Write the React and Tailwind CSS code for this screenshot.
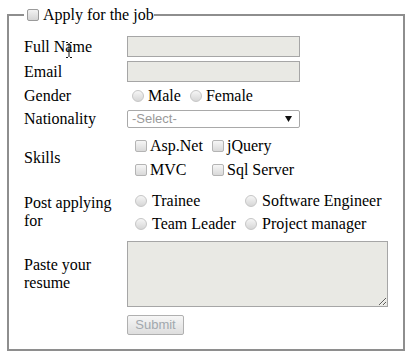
import React from 'react';

function Check() {
  return <span className="inline-block h-[12px] w-[12px] shrink-0 rounded-[2px] border border-[#b4b4b4] bg-linear-to-b from-[#f6f6f6] to-[#d9d9d9]" />;
}

function Radio() {
  return <span className="inline-block h-[12px] w-[12px] shrink-0 rounded-full border border-[#c6c6c6] bg-linear-to-b from-[#f6f6f6] to-[#d6d6d6]" />;
}

function Row({ label, className = '', children, labelExtra }) {
  return (
    <div className={`flex items-center ${className}`}>
      <div className="relative w-[103px] shrink-0 pr-[4px]">
        {label}
        {labelExtra}
      </div>
      <div className="flex-1">{children}</div>
    </div>
  );
}

function IBeam() {
  return (
    <svg className="pointer-events-none absolute left-[41px] top-[4px]" width="8" height="16" viewBox="0 0 8 16">
      <path d="M1 0.5h2M5 0.5h2M4 1v14M1 15.5h2M5 15.5h2M2.5 8h3" stroke="#111" strokeWidth="1" fill="none" />
    </svg>
  );
}

export default function App() {
  return (
    <div className="min-h-[356px] bg-white px-[7px] pt-[6px] pb-[5px] font-['Liberation_Serif',serif] text-[16px] leading-[18px] text-black">
      <fieldset className="border-2 border-[#8e8e8e] pl-[15px] pr-[10px] pb-[14px]">
        <legend>
          <span className="flex h-[18px] items-center">
            <span className="ml-[3px] mr-[4px] inline-block h-[12px] w-[12px] rounded-[2px] border border-[#9a9a9a] bg-linear-to-b from-[#f2f2f2] to-[#d4d4d4]" />
            Apply for the job
          </span>
        </legend>

        <Row label="Full Name" className="mt-[12px] h-[21px]" labelExtra={<IBeam />}>
          <input readOnly className="block h-[21px] w-[173px] border border-[#a6a6a6] bg-[#e9e9e4] outline-none" />
        </Row>

        <Row label="Email" className="mt-[4px] h-[21px]">
          <input readOnly className="block h-[21px] w-[173px] border border-[#a6a6a6] bg-[#e9e9e4] outline-none" />
        </Row>

        <Row label="Gender" className="mt-[2px] h-[24px]">
          <div className="flex items-center">
            <span className="ml-[5px] mr-[4px] flex"><Radio /></span>
            <span>Male</span>
            <span className="ml-[9px] mr-[4px] flex"><Radio /></span>
            <span>Female</span>
          </div>
        </Row>

        <Row label="Nationality" className="mt-[2px] h-[18px]">
          <div className="flex h-[18px] w-[173px] items-center justify-between rounded-[2px] border border-[#a9a9a9] bg-white pl-[4px] pr-[7px] font-['Liberation_Sans',Arial,sans-serif] text-[13px] text-[#9a9a9a]">
            <span>-Select-</span>
            <svg width="7" height="6" viewBox="0 0 7 6">
              <path d="M0 0h7L3.5 6z" fill="#111" />
            </svg>
          </div>
        </Row>

        <Row label="Skills" className="mt-[6px] h-[48px]">
          <div className="grid grid-cols-[77px_auto] grid-rows-[24px_24px]">
            <div className="flex items-center"><span className="ml-[8px] mr-[3px] flex"><Check /></span>Asp.Net</div>
            <div className="flex items-center"><span className="ml-[8px] mr-[3px] flex"><Check /></span>jQuery</div>
            <div className="flex items-center"><span className="ml-[8px] mr-[3px] flex"><Check /></span>MVC</div>
            <div className="flex items-center"><span className="ml-[8px] mr-[3px] flex"><Check /></span>Sql Server</div>
          </div>
        </Row>

        <Row label="Post applying for" className="mt-[7px] h-[46px]">
          <div className="grid grid-cols-[110px_auto] grid-rows-[23px_23px]">
            <div className="flex items-center"><span className="ml-[8px] mr-[5px] flex"><Radio /></span>Trainee</div>
            <div className="flex items-center"><span className="ml-[8px] mr-[5px] flex"><Radio /></span>Software Engineer</div>
            <div className="flex items-center"><span className="ml-[8px] mr-[5px] flex"><Radio /></span>Team Leader</div>
            <div className="flex items-center"><span className="ml-[8px] mr-[5px] flex"><Radio /></span>Project manager</div>
          </div>
        </Row>

        <Row label="Paste your resume" className="mt-[6px] h-[66px]">
          <textarea readOnly className="block h-[66px] w-[261px] resize border border-[#a6a6a6] bg-[#e9e9e4] outline-none" />
        </Row>

        <Row label="" className="mt-[8px] h-[20px]">
          <button
            type="button"
            className="flex h-[20px] w-[57px] items-center justify-center rounded-[2px] border border-[#b0b0b0] bg-linear-to-b from-[#f6f6f6] to-[#dedede] font-['Liberation_Sans',Arial,sans-serif] text-[13px] text-[#a2a8ae]"
          >
            Submit
          </button>
        </Row>
      </fieldset>
    </div>
  );
}
